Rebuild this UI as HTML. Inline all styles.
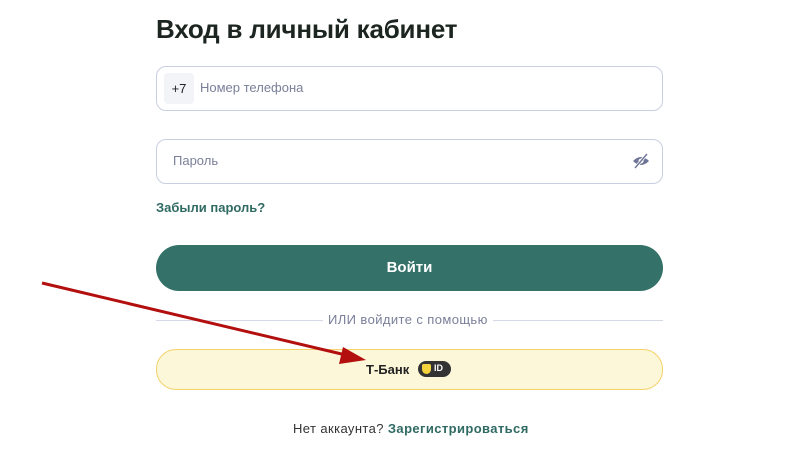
<!DOCTYPE html>
<html><head><meta charset="utf-8"><style>
body{margin:0;width:800px;height:451px;background:#fff;font-family:"Liberation Sans",sans-serif;position:relative;overflow:hidden}
.a{position:absolute}
h1{position:absolute;left:156px;top:14px;margin:0;font-size:26px;font-weight:bold;color:#1c2520;letter-spacing:-0.2px}
.inp{position:absolute;left:156px;width:505px;height:43px;border:1px solid #c9cfe0;border-radius:10px;background:#fff}
.ph{color:#7a7f99;font-size:13px}
</style></head><body>
<h1>Вход в личный кабинет</h1>
<div class="inp" style="top:66px">
 <div class="a" style="left:7px;top:6px;width:30px;height:31px;background:#f3f4f7;border-radius:4px;font-size:13px;color:#222;text-align:center;line-height:31px">+7</div>
 <div class="a ph" style="left:43px;top:13px">Номер телефона</div>
</div>
<div class="inp" style="top:139px">
 <div class="a ph" style="left:16px;top:13px">Пароль</div>
 <svg class="a" style="left:474px;top:13px" width="20" height="16" viewBox="0 0 20 16"><path d="M2 8 Q10 0 18 8 Q10 16 2 8Z" fill="#6f7596"/><circle cx="10" cy="8" r="2.5" fill="#fff"/><line x1="4" y1="15" x2="16" y2="1" stroke="#fff" stroke-width="3"/><line x1="4" y1="15" x2="16" y2="1" stroke="#6f7596" stroke-width="1.4"/></svg>
</div>
<div class="a" style="left:156px;top:200px;font-size:13px;font-weight:bold;color:#2f6a63">Забыли пароль?</div>
<div class="a" style="left:156px;top:245px;width:507px;height:46px;border-radius:23px;background:#347169;color:#fff;font-weight:bold;font-size:15px;text-align:center;line-height:46px">Войти</div>
<div class="a" style="left:156px;top:320px;width:507px;height:1px;background:#d5d9e6"></div>
<div class="a" style="left:323px;top:312px;padding:0 5px;background:#fff;font-size:13px;color:#7a7f99;letter-spacing:0.4px">ИЛИ войдите с помощью</div>
<div class="a" style="left:156px;top:349px;width:505px;height:39px;border:1px solid #f3d26a;border-radius:20px;background:#fdf7d9"></div>
<div class="a" style="left:366px;top:362px;font-size:13px;font-weight:bold;color:#222">Т-Банк</div>
<div class="a" style="left:418px;top:361px;width:33px;height:16px;border-radius:8px;background:#333"><div class="a" style="left:4px;top:3px;width:9px;height:10px;background:#f5d33d;border-radius:2px 2px 5px 5px"></div><div class="a" style="left:16px;top:2px;font-size:9px;font-weight:bold;color:#fff">ID</div></div>
<div class="a" style="left:293px;top:421px;font-size:13px;color:#333;letter-spacing:0.4px">Нет аккаунта? <b style="color:#2f6a63">Зарегистрироваться</b></div>
<svg class="a" style="left:0;top:0" width="800" height="451"><line x1="42" y1="283" x2="350" y2="356" stroke="#b30f0f" stroke-width="3"/><polygon points="366,360 343,347 339,364" fill="#b30f0f"/></svg>
</body></html>
